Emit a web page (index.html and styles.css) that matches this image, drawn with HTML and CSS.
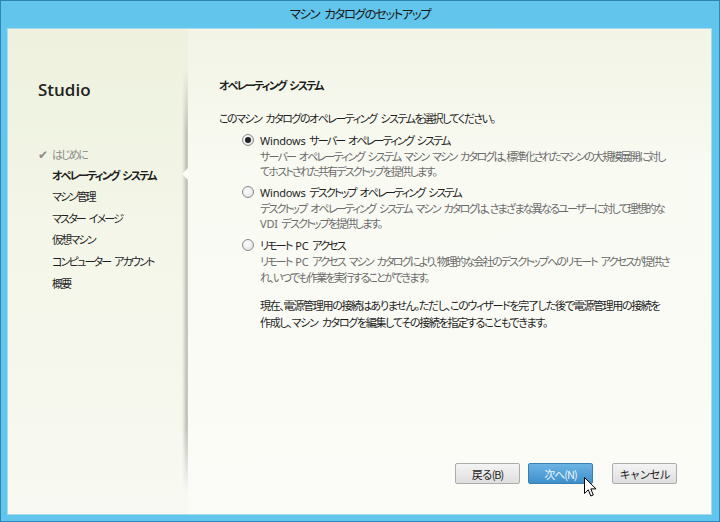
FILE: index.html
```html
<!DOCTYPE html>
<html lang="ja">
<head>
    <meta charset="UTF-8">
    <title>マシン カタログのセットアップ</title>
    <link rel="stylesheet" href="styles.css">
</head>
<body>
    <div class="window">
        <div class="titlebar">マシン カタログのセットアップ</div>
        <div class="client">
            <aside class="sidebar">
                <div class="brand">Studio</div>
                <ul class="steps">
                    <li class="done"><span class="check">✔</span>はじめに</li>
                    <li class="current">オペレーティング システム</li>
                    <li>マシン管理</li>
                    <li>マスター イメージ</li>
                    <li>仮想マシン</li>
                    <li>コンピューター アカウント</li>
                    <li>概要</li>
                </ul>
                <span class="notch"></span>
            </aside>

            <main class="page">
                <h1>オペレーティング システム</h1>
                <p class="lead">このマシン カタログのオペレーティング システムを選択してください。</p>

                <div class="options">
                    <div class="option">
                        <span class="radio checked"></span>
                        <div>
                            <div class="label"><span class="latin">Windows</span> サーバー オペレーティング システム</div>
                            <div class="desc">サーバー オペレーティング システム マシン マシン カタログは、標準化されたマシンの大規模展開に対し<br>てホストされた共有デスクトップを提供します。</div>
                        </div>
                    </div>
                    <div class="option">
                        <span class="radio"></span>
                        <div>
                            <div class="label"><span class="latin">Windows</span> デスクトップ オペレーティング システム</div>
                            <div class="desc">デスクトップ オペレーティング システム マシン カタログは、さまざまな異なるユーザーに対して理想的な<br><span class="latin">VDI</span> デスクトップを提供します。</div>
                        </div>
                    </div>
                    <div class="option">
                        <span class="radio"></span>
                        <div>
                            <div class="label">リモート <span class="latin">PC</span> アクセス</div>
                            <div class="desc">リモート <span class="latin">PC</span> アクセス マシン カタログにより、物理的な会社のデスクトップへのリモート アクセスが提供さ<br>れ、いつでも作業を実行することができます。</div>
                        </div>
                    </div>
                    <p class="note">現在、電源管理用の接続はありません。ただし、このウィザードを完了した後で電源管理用の接続を<br>作成し、マシン カタログを編集してその接続を指定することもできます。</p>
                </div>

                <div class="buttons">
                    <button class="btn">戻る(B)</button>
                    <button class="btn primary">次へ(N)</button>
                    <button class="btn cancel">キャンセル</button>
                </div>
            </main>

            <svg class="cursor" width="13" height="21" viewBox="0 0 13 21">
                <path d="M0.5 0.5 L0.5 16.5 L4.3 12.8 L6.8 19 L9.3 18 L6.8 11.9 L12 11.9 Z" fill="#fff" stroke="#000" stroke-width="1"/>
            </svg>
        </div>
    </div>
</body>
</html>
```

FILE: styles.css
```css
* {
    margin: 0;
    padding: 0;
    box-sizing: border-box;
}

body {
    font-family: "Noto Sans CJK JP", "Noto Sans", sans-serif;
    font-feature-settings: "palt";
    font-size: 11px;
    letter-spacing: -1.8px;
    word-spacing: 3px;
    color: #1e1e1e;
    background: #2f8fbf;
}

.latin {
    font-family: "Noto Sans", sans-serif;
    letter-spacing: -0.2px;
}

.window {
    width: 720px;
    height: 522px;
    background: #62c5eb;
    border: 1px solid #2d86b3;
    display: flex;
    flex-direction: column;
}

.titlebar {
    height: 27px;
    line-height: 26px;
    text-align: center;
    font-size: 12.5px;
    letter-spacing: -1.5px;
    word-spacing: 4px;
    color: #1a1a1a;
}

.client {
    flex: 1;
    margin: 0 7px 6px 6px;
    border: 1px solid #a9dbee;
    display: flex;
    position: relative;
    overflow: hidden;
    background: linear-gradient(180deg, #f2f4e6 0%, #f9faf2 30%, #fbfcf7 100%);
}

.sidebar {
    width: 180px;
    flex-shrink: 0;
    position: relative;
    background: linear-gradient(180deg, #edf1dd 0%, #f3f6e8 40%, #f8f9f2 100%);
}

.sidebar::after {
    content: "";
    position: absolute;
    right: 0;
    top: 40px;
    bottom: 22px;
    width: 6px;
    background: linear-gradient(90deg, rgba(200, 202, 194, 0), rgba(170, 172, 166, 0.8) 85%, #d8dad4);
    -webkit-mask-image: linear-gradient(180deg, transparent, #000 15%, #000 85%, transparent);
    mask-image: linear-gradient(180deg, transparent, #000 15%, #000 85%, transparent);
}

.brand {
    font-family: "Open Sans", "Noto Sans", sans-serif;
    font-size: 17px;
    font-weight: 600;
    letter-spacing: 0;
    color: #222;
    padding: 49px 0 0 30px;
}

.steps {
    list-style: none;
    margin-top: 42px;
    padding-left: 44px;
}

.steps li {
    height: 21.6px;
    line-height: 21.6px;
    white-space: nowrap;
}

.steps .done {
    color: #8c8c8c;
    margin-left: -14px;
}

.check {
    display: inline-block;
    width: 14px;
    font-size: 12px;
    letter-spacing: 0;
    color: #8c8c8c;
}

.steps .current {
    font-weight: 700;
}

.notch {
    position: absolute;
    right: 0;
    top: 139px;
    z-index: 1;
    width: 0;
    height: 0;
    border-top: 6px solid transparent;
    border-bottom: 6px solid transparent;
    border-right: 6px solid #fbfcf7;
}

.page {
    flex: 1;
    min-width: 0;
    display: flex;
    flex-direction: column;
    padding: 48px 0 0 31px;
}

h1 {
    font-size: 11px;
    font-weight: 700;
    line-height: 16px;
}

.lead {
    margin-top: 17px;
    line-height: 16px;
    letter-spacing: -1.5px;
}

.options {
    margin-top: 6px;
    padding-left: 23px;
    display: flex;
    flex-direction: column;
    gap: 6px;
}

.option {
    display: flex;
    gap: 6px;
}

.radio {
    width: 12px;
    height: 12px;
    margin-top: 2px;
    border-radius: 50%;
    border: 1px solid #8a8a8a;
    background: radial-gradient(circle at 40% 35%, #ffffff, #dcdcdc);
    flex-shrink: 0;
    display: flex;
    align-items: center;
    justify-content: center;
}

.radio.checked::after {
    content: "";
    width: 6px;
    height: 6px;
    border-radius: 50%;
    background: #222;
}

.label {
    line-height: 16px;
}

.desc {
    line-height: 14.5px;
    color: #6b6b6b;
    white-space: nowrap;
}

.note {
    margin: 7px 0 0 18px;
    line-height: 17px;
    letter-spacing: -1.3px;
    white-space: nowrap;
}

.buttons {
    margin-top: auto;
    margin-bottom: 30px;
    padding-right: 34px;
    display: flex;
    justify-content: flex-end;
}

.btn {
    width: 65px;
    height: 21px;
    font-family: inherit;
    font-size: 11px;
    letter-spacing: -1px;
    color: #1e1e1e;
    border: 1px solid #acacac;
    border-radius: 2px;
    background: linear-gradient(180deg, #f4f4f4, #dedede);
    margin-left: 8px;
}

.btn.primary {
    color: #eef6fc;
    border-color: #3a7fb4;
    background: linear-gradient(180deg, #6bb4e4, #3e8fcb);
}

.btn.cancel {
    margin-left: 19px;
}

.cursor {
    position: absolute;
    left: 576px;
    top: 448px;
}
```
